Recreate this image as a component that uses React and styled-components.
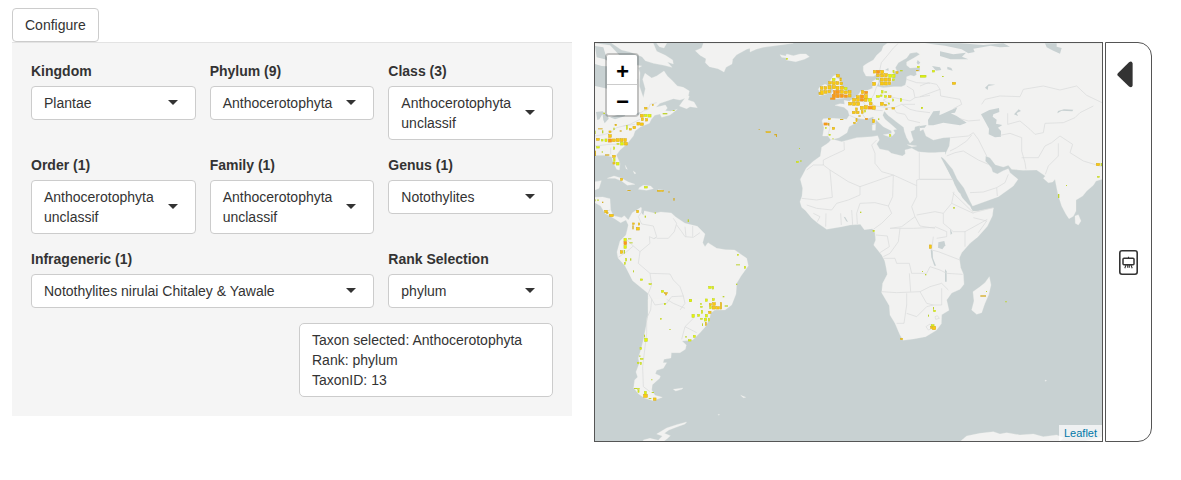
import React from "react";
import styled, { createGlobalStyle } from "styled-components";

const GlobalStyle = createGlobalStyle`
  *, *::before, *::after { box-sizing: border-box; }
  body {
    margin: 0;
    background: #fff;
    color: #333;
    font: 14px/20px "Liberation Sans", Arial, sans-serif;
  }
`;

const Page = styled.main`
  display: flex;
  align-items: flex-start;
  gap: 22px;
  padding: 8px 12px;
`;
const Sidebar = styled.section`
  width: 560px;
  flex: none;
`;
const Button = styled.button`
  display: block;
  font: inherit;
  color: #333;
  background: #fff;
  border: 1px solid #ccc;
  border-radius: 4px;
  padding: 6px 12px;
`;
const Panel = styled.div`
  display: flex;
  flex-direction: column;
  background: #f5f5f5;
  border-top: 1px solid #e3e3e3;
  height: 374px;
  padding: 18px 19px;
`;
const Fields = styled.div`
  display: grid;
  grid-template-columns: repeat(3, 1fr);
  grid-template-rows: 94px 94px 86px;
  column-gap: 14px;
  align-items: start;
`;
const Field = styled.div`
  grid-column: span ${(p) => p.$span || 1};
`;
const Label = styled.div`
  font-weight: 700;
  margin-bottom: 5px;
`;
const Select = styled.div`
  display: flex;
  align-items: center;
  justify-content: space-between;
  min-height: 34px;
  background: #fff;
  border: 1px solid #ccc;
  border-radius: 4px;
  padding: 6px 17px 6px 12px;
`;
const Value = styled.span`
  flex: 1;
  padding-right: 12px;
`;
const Caret = styled.span`
  flex: none;
  margin-bottom: 1px;
  border: 5px solid transparent;
  border-top-color: #333;
  border-bottom: 0;
`;
const Summary = styled.div`
  align-self: flex-end;
  margin-top: -12px;
  width: 254px;
  background: #fff;
  border: 1px solid #ccc;
  border-radius: 5px;
  padding: 6px 12px;
`;
const Viewer = styled.section`
  display: flex;
  gap: 2px;
  height: 400px;
  margin-top: 34px;
`;
const MapFrame = styled.div`
  position: relative;
  width: 509px;
  border: 1px solid #555;
  background: #c8d1d2;
  overflow: hidden;
`;
const MapSvg = styled.svg`
  display: block;
  width: 507px;
  height: 398px;
`;
const ZoomBar = styled.div`
  position: absolute;
  top: 10px;
  left: 10px;
  width: 34px;
  border: 2px solid rgba(0, 0, 0, 0.2);
  border-radius: 4px;
  background-clip: padding-box;
`;
const ZoomButton = styled.div`
  height: 30px;
  background: #fff;
  border-bottom: ${(p) => (p.$first ? "1px solid #ccc" : "0")};
  border-radius: ${(p) => (p.$first ? "2px 2px 0 0" : "0 0 2px 2px")};
  color: #000;
  font: bold 22px/38px "Liberation Mono", monospace;
  text-align: center;
  text-indent: 1px;
`;
const Attribution = styled.div`
  position: absolute;
  right: 0;
  bottom: 0;
  padding: 0 5px;
  background: rgba(255, 255, 255, 0.7);
  color: #0078a8;
  font-size: 11px;
  line-height: 16px;
`;
const Rail = styled.div`
  display: flex;
  flex-direction: column;
  align-items: center;
  width: 47px;
  border: 1px solid #555;
  border-radius: 0 14px 14px 0;
  padding-top: 18px;
`;
const ArrowIcon = styled.svg`
  width: 16px;
  height: 27px;
  margin-right: 7px;
`;
const LayerIcon = styled.svg`
  width: 19px;
  height: 25px;
  margin-top: 162px;
`;

// Every sheet uses its own origin and three units per map pixel.
const sheets = [
  {
    at: [590, 36],
    land: [
      "15,22 60,28 90,60 120,80 145,95 150,110 148,150 160,185 166,158 158,130 165,112 185,126 200,120 222,105 232,120 245,132 262,150 280,154 298,165 294,184 270,192 250,188 228,196 210,202 198,214 226,207 232,216 226,224 242,226 262,220 240,237 215,244 210,234 194,238 184,250 178,262 152,272 135,285 130,300 110,325 90,342 79,357 90,382 88,402 80,400 70,380 65,362 45,358 15,358",
      "268,210 278,196 290,180 298,180 294,192 312,198 322,215 300,212 290,218",
      "65,22 190,22 200,46 226,58 248,72 250,84 232,78 246,94 222,88 190,82 166,74 156,62 120,48 95,42",
      "200,22 230,22 222,36 208,32",
      "316,44 335,36 340,22 510,22 510,28 470,40 440,56 428,70 426,84 408,94 402,108 384,98 358,92 346,80 348,68 330,58",
      "130,86 155,90 145,96",
      "106,388 112,400 108,398",
      "130,405 138,412 133,413"
    ],
    water: [
      "15,30 40,34 48,60 60,80 45,70 20,64",
      "15,84 35,90 80,92 120,100 142,130 140,170 120,200 100,180 60,160 15,150",
      "18,228 38,226 48,238 36,236 28,250 22,252",
      "38,236 52,234 56,248 44,262 40,252",
      "60,244 100,232 106,240 75,250",
      "130,235 152,228 146,238"
    ],
    borders: ["15,300 40,296 62,290 80,275", "15,330 60,325 100,325", "62,335 62,355", "100,270 135,265", "160,225 175,220 180,205 200,200", "150,232 160,225", "80,275 120,265 150,250"],
    cells: [
      "163,213,9,7,o 186,205,5,5,o 150,234,11,10,o 162,234,10,9,y 173,234,11,10,y 153,245,8,10,o 166,247,8,9,o 140,258,10,10,o 150,260,11,9,o 128,270,10,9,o 117,277,8,6,o 108,268,5,13,y 74,264,7,6,o 70,275,4,7,y 89,283,6,4,o 24,277,14,3,o 36,283,4,9,y 56,284,8,7,o 55,295,10,10,o 18,306,11,8,o 33,309,7,7,y 44,308,8,10,y 54,308,12,11,r 66,308,11,10,o 78,307,11,11,o 90,307,10,11,o 101,307,9,11,o 91,318,10,10,y 102,318,11,10,o 80,321,8,5,y 70,332,5,9,y 19,331,10,6,y 35,346,4,4,y 45,355,13,4,o 67,357,10,8,o 70,367,6,10,y 68,378,8,7,o 78,378,10,10,y 15,344,3,16,o 218,231,14,4,y 248,222,6,3,y 14,284,3,10,y 40,230,5,4,y"
    ]
  },
  {
    at: [750, 36],
    land: [
      "0,22 130,22 85,28 40,34 18,40 0,48",
      "90,56 107,60 110,54 130,59 150,54 168,54 178,62 163,70 137,77 108,72 115,67 95,64",
      "250,120 268,114 260,127 276,130 270,145 280,156 286,165 302,168 300,180 283,186 242,190 253,180 243,175 250,165 246,150 238,142 243,130",
      "210,152 225,145 238,150 240,165 230,174 207,179 210,168 205,160",
      "340,90 352,82 370,72 380,58 395,44 400,30 412,22 540,22 540,94 514,94 480,96 470,88 470,78 490,67 510,55 500,49 480,52 470,66 445,80 436,95 442,108 430,116 422,145 402,150 392,135 387,112 370,121 348,120 340,105",
      "255,208 270,203 284,205 282,193 298,196 314,185 326,175 333,164 352,163 368,157 366,137 385,125 386,137 380,151 400,155 430,152 454,152 466,147 470,130 470,122 482,118 492,121 500,116 498,107 540,104 540,292 512,268 495,272 493,282 482,286 486,300 490,312 480,322 470,305 463,286 461,274 440,258 425,246 414,238 403,225 398,238 405,250 421,263 440,280 430,282 435,291 426,301 424,284 400,272 384,257 369,242 348,250 320,247 322,258 297,272 291,290 267,305 242,311 234,300 218,300 222,275 216,254 220,248 248,247 290,250 298,238 294,224 282,214",
      "400,296 426,292 422,304",
      "367,267 377,264 376,283 367,283",
      "370,246 376,244 376,262 370,262",
      "472,326 500,330 485,332",
      "388,140 398,137 398,149 389,148"
    ],
    water: ["430,108 437,106 437,120 430,119", "405,102 415,96 416,104", "500,80 503,72 511,80 504,86"],
    borders: ["388,108 394,80 415,55 430,36 445,22", "298,238 320,247", "315,185 340,198 350,213 338,235 345,246", "380,151 372,175 360,195 375,210 400,213 420,205 400,192 420,182 455,190 480,195 495,185 490,162 470,150", "375,210 372,222 398,224", "400,213 430,216 455,205 495,205", "430,216 440,230 465,235 475,252 510,260", "455,205 480,220 500,225 540,230", "236,256 240,275 234,298", "470,130 500,140 540,142", "495,185 540,178"],
    cells: [
      "108,66,6,5,y 258,114,11,10,o 246,126,10,9,y 269,125,6,11,o 235,136,10,9,o 246,136,11,11,o 258,136,9,11,o 269,138,10,9,o 210,151,10,10,o 222,151,9,10,o 233,148,11,12,o 246,148,11,11,o 210,163,11,14,o 222,163,10,10,o 233,162,9,9,o 257,150,11,12,o 270,150,11,11,o 282,153,10,9,y 250,163,7,12,r 257,162,12,12,r 270,162,11,11,o 282,164,11,10,o 246,174,12,12,r 258,174,11,12,r 270,174,11,11,r 282,176,11,9,r 294,174,10,10,o 241,185,15,6,r 294,163,10,10,o 206,169,5,8,o 333,162,9,12,o 343,165,11,9,r 318,178,11,9,o 330,176,12,12,r 330,188,12,8,r 343,175,10,15,o 307,186,11,11,o 319,187,10,10,o 295,198,11,10,o 307,198,11,11,o 319,198,11,11,o 342,187,10,10,o 354,186,12,11,y 357,198,10,10,o 330,210,11,11,o 342,208,11,12,o 354,210,14,10,r 367,209,10,12,o 316,215,7,10,o 306,225,11,9,o 318,225,10,9,o 333,223,7,10,o 343,222,5,7,y 325,238,7,4,o 345,246,9,6,r 310,258,7,6,o 317,247,5,11,o 378,178,12,7,y 390,176,7,6,y 402,178,9,7,y 414,178,10,8,o 390,198,11,11,o 402,204,9,6,o 414,200,5,5,y 427,188,5,8,y 425,214,10,6,o 406,217,7,4,o 450,187,6,10,y 393,163,7,9,y 403,166,8,4,y",
      "369,102,9,10,o 378,102,12,11,r 391,102,11,12,o 379,114,10,9,o 391,114,11,10,o 403,112,10,11,o 415,114,11,11,y 427,114,9,11,y 390,126,11,10,o 402,125,11,11,o 414,126,9,10,o 390,137,12,11,o 402,137,11,11,o 414,137,9,10,o 367,138,11,11,o 428,102,5,9,y 437,106,8,7,o 450,102,8,4,y 378,127,9,4,y 426,128,8,7,y 501,90,8,6,y 498,102,8,3,o 510,117,18,7,y 513,213,6,5,y",
      "367,250,8,11,o 418,294,5,9,y 234,246,8,6,o 270,249,10,3,o 221,260,12,8,r 234,261,4,8,o 225,274,5,5,y 246,273,9,8,o 236,294,6,5,y 247,307,4,3,y 47,286,16,5,o 73,294,8,4,o 78,297,3,6,o 26,279,3,3,o 147,336,3,3,y 138,375,9,6,y 150,373,5,4,y 384,247,4,5,y"
    ]
  },
  {
    at: [920, 36],
    land: [
      "0,22 546,22 546,430 528,435 520,448 500,465 488,480 468,492 468,525 460,541 447,548 438,535 425,510 414,475 405,430 398,438 385,440 370,427 376,420 350,402 310,403 275,400 265,388 250,393 226,386 210,365 197,360 196,375 214,395 218,408 232,414 250,404 265,398 270,410 294,430 280,450 255,468 235,482 158,510 150,495 132,456 112,430 98,400 78,376 78,350 88,330 91,304 70,305 40,312 18,300 10,280 0,285",
      "465,540 475,536 483,555 475,567 466,562",
      "0,350 45,350 75,348 78,368 60,360 80,398 98,435 120,478 140,500 160,528 220,516 207,548 170,605 0,605"
    ],
    water: [
      "25,268 24,252 40,226 60,224 58,238 72,232 80,228 112,214 105,230 92,232 110,240 140,260 120,268 95,264 70,260 40,268",
      "183,235 208,222 237,216 238,228 220,235 218,242 230,251 228,263 247,267 234,275 243,285 243,302 225,304 206,295 207,278 196,258",
      "15,22 120,22 190,27 250,22 270,32 240,34 212,29 160,38 164,48 145,52 125,40 75,29",
      "60,46 100,55 138,50 126,62 145,70 92,70 60,60",
      "375,22 410,22 410,32 425,36 420,53 400,44 380,34",
      "412,232 414,225 432,220 460,221 457,226 425,224",
      "195,155 206,145 226,146 205,150 203,162",
      "282,235 296,220 303,225 290,231 294,240",
      "36,90 60,94 64,102 48,104", "0,270 20,267 14,275 0,276", "82,92 94,96 98,104 82,100"
    ],
    borders: [
      "0,150 25,140 50,145 60,160 0,182", "60,160 62,180 120,190 125,205 100,218", "185,205 195,190 240,180 300,182 310,160 370,150 420,162 470,150 500,178 546,200", "263,232 263,265 300,255 330,280 345,295 370,290 375,262 430,260 465,245 480,230 520,210", "240,298 270,292 305,305 305,345 315,380 318,400", "305,365 355,365 375,330 395,320 420,300 458,325 450,350 490,375 546,392", "376,415 385,390 415,360 415,322", "120,248 145,255 180,252", "92,305 145,300 160,290 175,310 190,340 200,360", "90,345 110,335 140,315 155,297", "80,360 105,350 130,345 175,372 205,385", "150,470 190,468 230,455 232,480", "230,455 255,440 265,415", "0,430 98,430", "98,470 160,530 220,515", "160,545 200,555 175,590"
    ],
    cells: ["36,102,9,7,y 0,118,19,6,y 66,120,5,3,y 96,138,12,8,o 528,381,12,9,o 542,381,4,9,y 532,420,7,5,y 414,474,4,12,y 438,447,3,3,y 3,213,6,5,y 100,514,4,4,y"]
  },
  {
    at: [590, 170],
    land: [
      "15,35 34,32 27,55 15,60", "15,82 38,81 60,86 62,120 70,137 95,143 103,137 115,150 127,128 153,112 161,122 195,130 212,126 244,129 257,141 285,160 322,169 345,192 338,218 345,230 354,218 380,235 407,239 434,240 470,265 475,287 453,318 440,340 438,372 425,405 405,420 175,420 174,370 128,332 105,287 84,264 81,246 90,213 108,195 115,165 108,150 92,158 74,146 45,130 32,108 15,98",
      "52,25 72,18 95,25 115,36 135,43 112,46 95,33 75,25", "150,52 160,46 182,48 190,56 170,61 145,58", "110,60 121,61 116,64", "204,59 219,60 214,65"
    ],
    water: ["155,114 164,116 160,136 154,128"],
    borders: ["45,125 60,120", "158,122 145,140 155,162 190,168 200,200 192,206 200,202", "200,205 235,205 253,185 260,160 250,145", "260,165 275,185 285,200 310,202 330,188", "108,207 130,228 150,245 180,220 178,200 192,206", "150,245 145,280 180,310 240,312 250,330 270,350 280,378 285,400 270,420", "180,310 185,345 175,370 195,405 230,400 245,380 280,378", "85,262 110,245 130,228", "285,170 288,200", "308,168 308,200"],
    cells: [
      "91,24,8,8,o 162,48,11,7,y 112,60,10,3,o 201,60,21,5,o 235,64,4,4,o 250,84,4,8,o 14,88,3,6,y 22,88,4,5,y 36,95,4,4,o 43,120,10,9,o 49,126,6,6,o 57,132,14,9,o 139,120,8,9,o 164,137,4,6,y 194,127,4,4,y 293,148,4,8,y 127,158,7,6,o 127,166,4,12,o 144,158,6,8,o 138,171,11,10,o 101,204,9,10,y 101,214,10,11,r 101,226,9,10,y 90,241,9,10,o 101,240,4,11,y 118,217,10,3,y 114,205,10,3,y 106,264,5,10,y 120,265,4,7,y 102,276,5,8,y 129,301,3,6,y 150,326,9,6,y 176,340,9,5,y 213,360,9,8,y 222,367,11,5,o 226,371,5,5,o 222,399,5,5,y 297,388,9,8,y 441,252,6,5,y 462,288,6,8,y 438,283,12,3,y 438,341,4,4,y 355,348,10,8,y 366,348,6,10,y 345,386,8,9,y 366,385,8,8,y 398,378,5,4,y 367,397,10,10,o 357,400,8,8,o 366,408,12,10,o 379,409,10,9,o 390,397,6,21,o 358,408,7,9,y 404,406,10,4,y 331,400,5,5,y"
    ]
  },
  {
    at: [590, 300],
    land: [
      "174,-2 430,-2 424,12 400,22 374,30 362,40 358,58 346,80 330,98 308,120 276,123 289,135 286,148 270,158 244,158 243,174 222,178 219,188 230,188 220,205 200,211 196,221 211,228 209,235 187,254 185,270 195,286 217,292 190,302 163,294 145,281 131,264 134,240 143,231 138,216 148,190 145,175 153,148 161,116 167,85 174,48",
      "250,268 279,264 275,268 257,273", "452,286 467,292 460,293",
      "160,420 180,415 205,421 217,408 200,402 230,384 260,374 290,366 285,372 258,382 237,390 223,400 241,407 233,415 220,425 160,425", "384,343 389,344 386,346"
    ],
    water: [],
    borders: ["185,-2 182,30 170,55 170,100 164,150 158,200 160,260 180,275", "285,80 320,98", "285,80 275,118", "285,80 310,55 308,45", "230,-2 250,10 285,25"],
    cells: [
      "222,10,5,5,y 297,-2,9,7,y 210,54,5,5,y 305,42,9,11,y 322,42,8,8,y 333,30,6,11,y 331,54,8,5,y 345,42,8,10,y 355,33,9,8,o 342,54,9,10,y 354,54,5,10,y 345,66,5,11,o 336,70,3,8,y 331,18,7,5,y 286,108,4,5,y 309,105,8,8,y 294,118,10,6,y 163,114,10,11,y 162,104,3,8,y 149,142,7,7,y 148,166,3,5,y 150,174,10,5,y 141,186,7,6,y 150,186,5,9,y 132,264,9,3,y 142,264,7,5,y 143,271,5,7,y 162,273,8,10,y 160,282,13,11,o 189,293,10,9,o 176,294,8,3,y 238,87,4,3,y 184,237,3,4,y 185,276,7,3,y"
    ]
  },
  {
    at: [780, 120],
    land: [
      "150,62 158,58 185,65 230,53 275,50 293,47 298,60 290,72 299,87 325,92 334,100 367,108 376,102 375,90 395,85 415,95 450,100 485,98 499,104 499,124 485,110 481,115 505,157 520,185 524,207 541,221 548,240 570,258 576,274 596,274 640,265 637,288 622,319 594,350 570,370 545,398 538,414 542,443 550,462 552,493 540,508 515,519 500,540 507,571 485,584 484,611 469,631 437,650 400,657 370,661 360,645 345,610 330,585 328,557 305,518 308,490 322,463 318,440 314,422 305,405 281,375 287,360 285,338 277,326 253,329 241,313 210,315 185,320 140,328 114,310 95,294 77,272 65,262 60,245 66,228 68,205 61,178 79,144 98,125 121,109 125,82 140,72 148,66",
      "628,470 633,495 626,524 614,552 605,578 590,583 575,570 582,543 579,515 598,502 615,488"
    ],
    water: ["475,367 493,363 496,376 487,388 474,383", "510,326 517,340 512,344", "452,388 458,392 459,415 468,437 463,437 454,412", "495,447 500,454 500,485 495,485", "191,290 196,292 204,306 199,304"],
    borders: [
      "192,65 193,90 150,110 130,120 130,135 100,135 80,150", "130,135 150,150 205,185 240,200 340,165 305,155 285,130 285,100 275,75 290,60", "150,150 157,232 110,240 65,235", "240,200 240,225 205,240 170,250 155,270 110,265 80,255", "340,165 410,197 410,180 418,178 418,97", "410,197 410,230 395,260 405,290 365,320 330,325", "418,178 520,178", "340,165 338,230 325,258 285,248 240,250 230,280 232,312", "325,258 335,280 305,310 280,328", "410,285 465,275 490,280 515,250 522,215", "515,250 580,280", "490,280 490,310 520,335 555,335 622,298", "555,335 555,380", "465,320 500,335 500,350 470,355", "405,290 420,318 465,325", "330,325 360,325 355,365 330,400 310,410", "360,325 400,325 465,322", "310,415 345,415 350,430 388,430 395,460 440,460 450,440 480,450 500,460 548,463", "305,515 350,518 420,515 450,500 485,490 505,510", "388,460 392,515", "380,520 380,555 372,610 350,610", "380,580 410,590 440,560 460,555 485,555", "420,515 440,550 460,555", "485,555 485,505", "472,587 478,595 467,598 465,590 472,587", "450,612 438,620 445,630 458,625 450,612", "288,345 322,348 328,380 300,398", "138,280 137,320", "182,280 184,315", "215,270 218,315", "100,280 120,290 112,305", "460,350 455,390 475,395 540,420"
    ],
    cells: ["447,374,8,12,o 278,330,6,6,y 426,453,3,3,y 435,462,4,4,y 601,526,17,4,o 618,513,3,3,y 460,570,8,6,y 459,561,3,8,y 444,584,3,6,y 451,618,6,8,o 456,618,12,12,o 453,613,10,6,y 361,654,8,6,o 676,543,4,4,y 520,261,4,4,y 240,275,4,4,y"]
  },
  {
    at: [940, 420],
    land: ["60,65 80,48 120,40 160,35 180,42 200,38 240,45 280,42 310,50 350,45 370,53 360,65", "315,-120 320,-118 316,-116", "485,50 487,65 430,65"],
    water: [],
    borders: [],
    cells: []
  }
];

const cellFill = { y: "#e8f800", o: "#fccb0c", r: "#fd9c12" };
const cellEdge = { y: "#bed232", o: "#d4ac28", r: "#e0922a" };

function Cells({ data }) {
  return data.split(" ").map((entry, i) => {
    const [x, y, w, h, tone] = entry.split(",");
    const small = Math.min(w, h) < 5;
    const inset = small ? 0 : 0.8;
    return (
      <rect
        key={i}
        x={+x + inset}
        y={+y + inset}
        width={w - inset * 2}
        height={h - inset * 2}
        fill={small ? cellEdge[tone] : cellFill[tone]}
        stroke={cellEdge[tone]}
        strokeWidth={small ? 0 : 1.6}
      />
    );
  });
}

function WorldMap() {
  const place = (at) => `translate(${at[0]} ${at[1]}) scale(.33333)`;
  const layer = (name, draw) =>
    sheets.map((s, i) => (
      <g key={name + i} transform={place(s.at)}>
        {s[name].map(draw)}
      </g>
    ));
  return (
    <MapSvg viewBox="595 43 507 398" aria-label="Occurrence map">
      <g fill="#f2f2f1" stroke="#f2f2f1" strokeWidth=".8" strokeLinejoin="round">
        {layer("land", (d, i) => <polygon key={i} points={d} />)}
      </g>
      <g fill="#c8d1d2">{layer("water", (d, i) => <polygon key={i} points={d} />)}</g>
      <g fill="none" stroke="#dadbdb" strokeWidth="2.2" strokeLinejoin="round">
        {layer("borders", (d, i) => <polyline key={i} points={d} />)}
      </g>
      {layer("cells", (d, i) => <Cells key={i} data={d} />)}
    </MapSvg>
  );
}

const fields = [
  ["Kingdom", "Plantae"],
  ["Phylum (9)", "Anthocerotophyta"],
  ["Class (3)", "Anthocerotophyta unclassif"],
  ["Order (1)", "Anthocerotophyta unclassif"],
  ["Family (1)", "Anthocerotophyta unclassif"],
  ["Genus (1)", "Notothylites"],
  ["Infrageneric (1)", "Notothylites nirulai Chitaley & Yawale", 2],
  ["Rank Selection", "phylum"]
];

export default function App() {
  return (
    <Page>
      <GlobalStyle />
      <Sidebar>
        <Button>Configure</Button>
        <Panel>
          <Fields>
            {fields.map(([label, value, span]) => (
              <Field key={label} $span={span}>
                <Label>{label}</Label>
                <Select>
                  <Value>{value}</Value>
                  <Caret />
                </Select>
              </Field>
            ))}
          </Fields>
          <Summary>
            <div>Taxon selected: Anthocerotophyta</div>
            <div>Rank: phylum</div>
            <div>TaxonID: 13</div>
          </Summary>
        </Panel>
      </Sidebar>
      <Viewer>
        <MapFrame>
          <WorldMap />
          <ZoomBar>
            <ZoomButton $first>+</ZoomButton>
            <ZoomButton>−</ZoomButton>
          </ZoomBar>
          <Attribution>Leaflet</Attribution>
        </MapFrame>
        <Rail>
          <ArrowIcon viewBox="0 0 16 27">
            <path d="M.9 12.2 12 1.2Q15 -.6 15.6 2.5V24.5Q15 27.4 12 25.6L.9 14.8Q-.3 13.5 .9 12.2Z" fill="#333" />
          </ArrowIcon>
          <LayerIcon viewBox="0 0 19 25" fill="none" stroke="#333">
            <rect x=".8" y=".8" width="17.4" height="23.4" rx="2.2" strokeWidth="1.6" />
            <rect x="4" y="8.3" width="11" height="6.4" rx="1" strokeWidth="1.5" />
            <path d="M9.5 6.8V8.5M7 15 5.8 18.3M8.7 15V17.8M10.3 15V17.8M12 15 13.2 18.3" strokeWidth="1.1" />
          </LayerIcon>
        </Rail>
      </Viewer>
    </Page>
  );
}
